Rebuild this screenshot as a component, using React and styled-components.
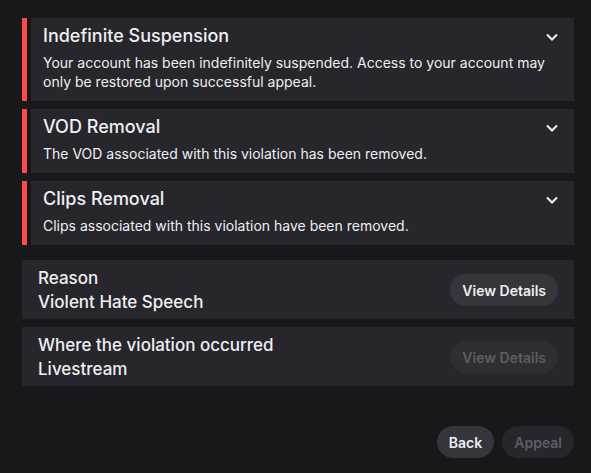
import styled, { createGlobalStyle } from 'styled-components';

const GlobalStyle = createGlobalStyle`
  html, body {
    margin: 0;
    background: #18181b;
  }
  body {
    font-family: Inter, "Noto Sans", sans-serif;
    color: #efeff1;
    -webkit-font-smoothing: antialiased;
  }
`;

const actions = [
  {
    title: 'Indefinite Suspension',
    text: 'Your account has been indefinitely suspended. Access to your account may only be restored upon successful appeal.',
  },
  {
    title: 'VOD Removal',
    text: 'The VOD associated with this violation has been removed.',
  },
  {
    title: 'Clips Removal',
    text: 'Clips associated with this violation have been removed.',
  },
];

const details = [
  { label: 'Reason', value: 'Violent Hate Speech', enabled: true },
  { label: 'Where the violation occurred', value: 'Livestream', enabled: false },
];

function Chevron() {
  return (
    <ChevronIcon width="20" height="20" viewBox="0 0 20 20">
      <polyline points="5,7.5 10,12.5 15,7.5" fill="none" stroke="#efeff1" strokeWidth="2" />
    </ChevronIcon>
  );
}

function App() {
  return (
    <Page>
      <GlobalStyle />
      <ActionList>
        {actions.map((a) => (
          <ActionRow key={a.title}>
            <Stripe />
            <ActionCard>
              <ActionHeader>
                <ActionTitle>{a.title}</ActionTitle>
                <Chevron />
              </ActionHeader>
              <ActionText>{a.text}</ActionText>
            </ActionCard>
          </ActionRow>
        ))}
      </ActionList>
      <DetailList>
        {details.map((d) => (
          <DetailCard key={d.label}>
            <DetailText>
              <div>{d.label}</div>
              <div>{d.value}</div>
            </DetailText>
            <PillButton $disabled={!d.enabled}>View Details</PillButton>
          </DetailCard>
        ))}
      </DetailList>
      <Footer>
        <PillButton>Back</PillButton>
        <PillButton $disabled $flat>Appeal</PillButton>
      </Footer>
    </Page>
  );
}
export default App;

const Page = styled.div`
  padding: 18px 17px 14px 22px;
  display: flex;
  flex-direction: column;
`;

const ActionList = styled.div`
  display: flex;
  flex-direction: column;
  gap: 8px;
`;

const ActionRow = styled.div`
  display: flex;
  gap: 4px;
`;

const Stripe = styled.div`
  width: 5px;
  flex: none;
  background: #ff4a4a;
`;

const ActionCard = styled.div`
  flex: 1;
  background: #26262c;
  padding: 6px 12px 10px 12px;
`;

const ActionHeader = styled.div`
  display: flex;
  justify-content: space-between;
  align-items: center;
  margin-bottom: 5px;
`;

const ActionTitle = styled.div`
  font-size: 18px;
  line-height: 24px;
  font-weight: 500;
`;

const ChevronIcon = styled.svg`
  display: block;
  margin-top: 2px;
`;

const ActionText = styled.div`
  font-size: 14px;
  line-height: 19px;
  color: #efeff1;
`;

const DetailList = styled.div`
  margin-top: 15px;
  display: flex;
  flex-direction: column;
  gap: 8px;
`;

const DetailCard = styled.div`
  background: #26262c;
  display: flex;
  align-items: center;
  justify-content: space-between;
  padding: 6px 16px 5px 16px;
`;

const DetailText = styled.div`
  font-size: 17px;
  line-height: 24px;
  font-weight: 500;
`;

const PillButton = styled.button`
  font-family: inherit;
  font-size: 14px;
  font-weight: 600;
  height: 32px;
  padding: 0 12px;
  border: none;
  border-radius: 16px;
  background: ${(p) => (p.$flat ? '#26262c' : p.$disabled ? '#2e2e33' : '#35353b')};
  color: ${(p) => (p.$disabled ? '#5d5d63' : '#efeff1')};
  cursor: ${(p) => (p.$disabled ? 'default' : 'pointer')};
`;

const Footer = styled.div`
  margin-top: 40px;
  display: flex;
  justify-content: flex-end;
  gap: 8px;
`;
